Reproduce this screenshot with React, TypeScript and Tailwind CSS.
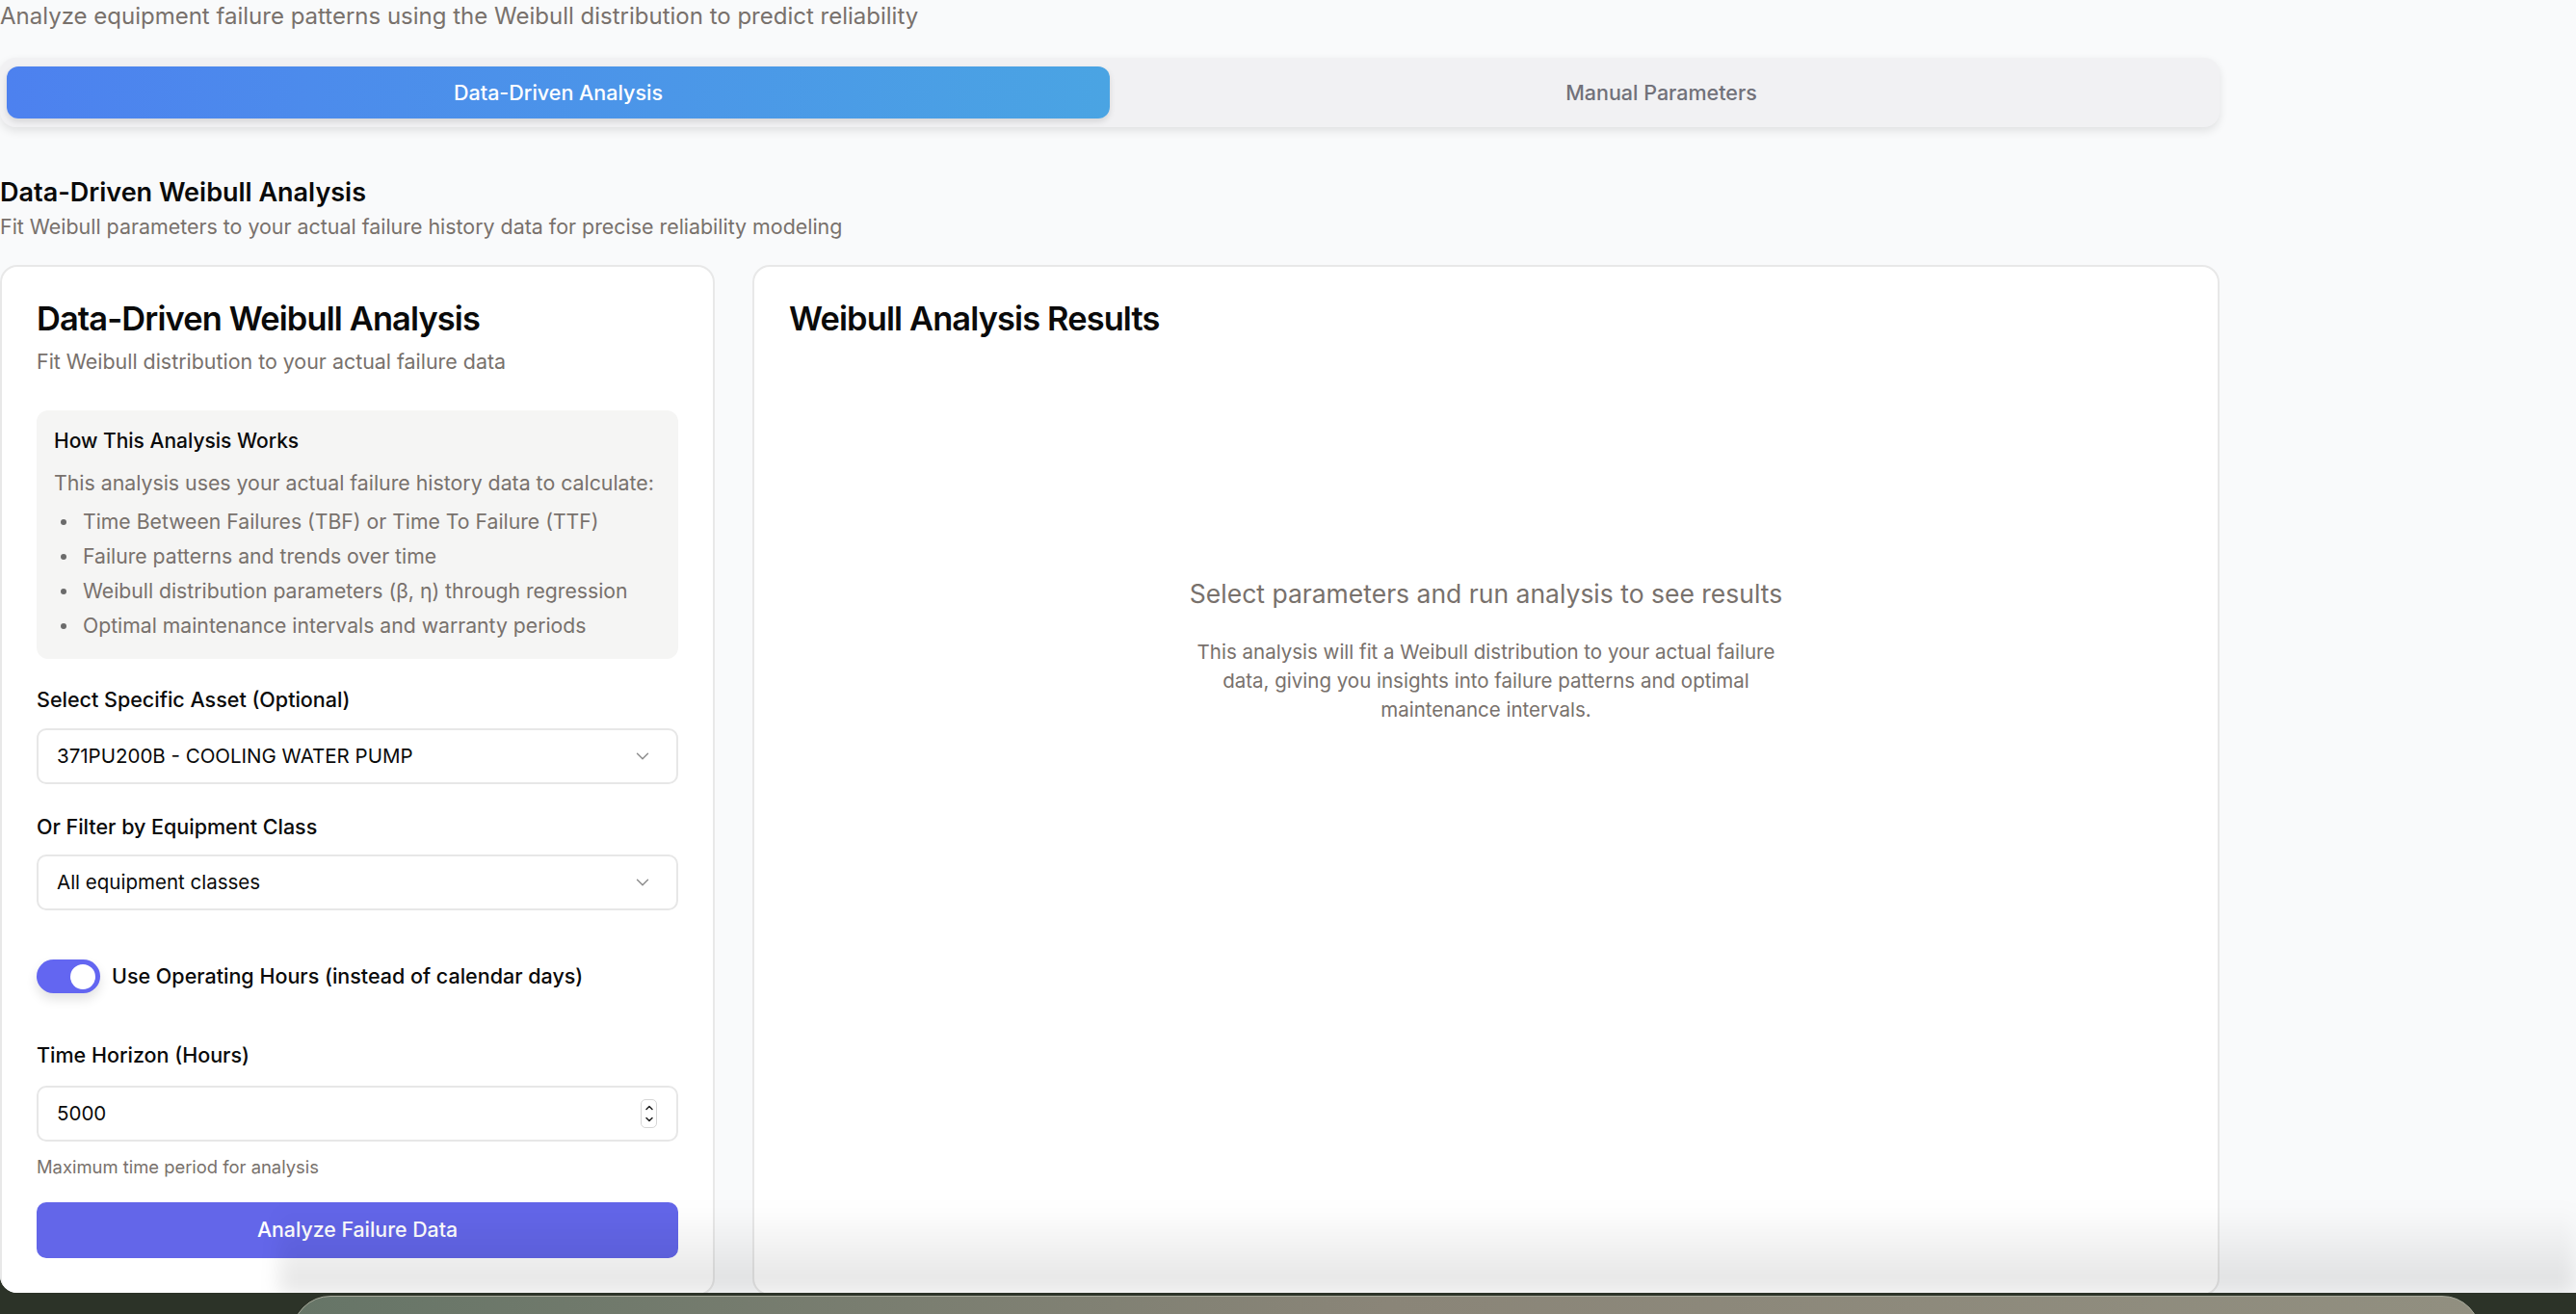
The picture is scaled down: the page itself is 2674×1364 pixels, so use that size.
import { ChevronDown, ChevronUp } from "lucide-react";

const bullets = [
    "Time Between Failures (TBF) or Time To Failure (TTF)",
    "Failure patterns and trends over time",
    "Weibull distribution parameters (β, η) through regression",
    "Optimal maintenance intervals and warranty periods",
];

function SelectBox({ value }: { value: string }) {
    return (
        <div className="flex h-[58px] items-center justify-between rounded-[10px] border-2 border-[#e7e7e7] bg-white pl-[19px] pr-[24px]">
            <span className="text-[20.5px] text-[#0a0a0a]">{value}</span>
            <ChevronDown className="h-[22px] w-[22px] text-[#8a8a8a]" strokeWidth={1.5} />
        </div>
    );
}

function Label({ children }: { children: React.ReactNode }) {
    return <div className="text-[21.5px] font-medium leading-[28px] text-[#0a0a0a]">{children}</div>;
}

export default function App() {
    return (
        <div className="relative h-[1364px] w-full overflow-hidden bg-[#2c3328] font-['Inter',sans-serif]">
            {/* browser window */}
            <div className="relative h-[1342px] overflow-hidden rounded-bl-[18px] bg-[#f9fafb]">
                <div className="w-[2304px]">
                    <p className="text-[24px] leading-[34px] text-[#78716c]">
                        Analyze equipment failure patterns using the Weibull distribution to predict reliability
                    </p>

                    <div className="mt-[26px] grid h-[72px] grid-cols-2 rounded-[16px] bg-[#f1f1f3] px-[7px] py-[9px] shadow-[0_4px_10px_rgba(0,0,0,0.10)]">
                        <div className="flex items-center justify-center rounded-[12px] bg-linear-to-r from-[#4d81ef] to-[#4aa4e3] text-[21.5px] font-medium text-white shadow-[0_3px_6px_rgba(0,0,0,0.12)]">
                            Data-Driven Analysis
                        </div>
                        <div className="flex items-center justify-center text-[21.5px] font-medium text-[#71717a]">
                            Manual Parameters
                        </div>
                    </div>

                    <h2 className="mt-[50px] text-[27px] font-semibold leading-[36px] text-[#0a0a0a]">
                        Data-Driven Weibull Analysis
                    </h2>
                    <p className="mt-[1px] text-[21.4px] leading-[32px] text-[#78716c]">
                        Fit Weibull parameters to your actual failure history data for precise reliability modeling
                    </p>

                    <div className="mt-[24px] flex gap-[39px]">
                        {/* left card */}
                        <div className="flex h-[1070px] w-[742px] shrink-0 flex-col rounded-[18px] border-2 border-[#e8e8e8] bg-white px-[36px] pt-[35px]">
                            <h3 className="text-[34.4px] font-semibold leading-[38px] tracking-tight text-[#0a0a0a]">
                                Data-Driven Weibull Analysis
                            </h3>
                            <p className="mt-[11px] text-[21.4px] leading-[28px] text-[#78716c]">
                                Fit Weibull distribution to your actual failure data
                            </p>

                            <div className="mt-[37px] rounded-[12px] bg-[#f5f5f4] px-[18px] pb-[20px] pt-[18px]">
                                <div className="text-[21px] font-medium leading-[28px] text-[#0a0a0a]">How This Analysis Works</div>
                                <p className="mt-[14px] text-[21.3px] leading-[30px] text-[#78716c]">
                                    This analysis uses your actual failure history data to calculate:
                                </p>
                                <ul className="mt-[11px] flex flex-col gap-[7px] text-[21.2px] leading-[29px] text-[#78716c]">
                                    {bullets.map(b => (
                                        <li key={b} className="flex items-center">
                                            <span className="ml-[7px] mr-[17px] h-[6px] w-[6px] shrink-0 rounded-full bg-[#6b6b6b]" />
                                            {b}
                                        </li>
                                    ))}
                                </ul>
                            </div>

                            <div className="mt-[28px]">
                                <Label>Select Specific Asset (Optional)</Label>
                            </div>
                            <div className="mt-[16px]">
                                <SelectBox value="371PU200B - COOLING WATER PUMP" />
                            </div>

                            <div className="mt-[30px]">
                                <Label>Or Filter by Equipment Class</Label>
                            </div>
                            <div className="mt-[15px]">
                                <SelectBox value="All equipment classes" />
                            </div>

                            <div className="mt-[51px] flex items-center gap-[12px]">
                                <div className="flex h-[35px] w-[66px] items-center justify-end rounded-full bg-[#6366f1] pr-[2px] shadow-[0_6px_12px_rgba(0,0,0,0.12)]">
                                    <div className="h-[32px] w-[32px] rounded-full border-[3px] border-[#6366f1] bg-white" />
                                </div>
                                <span className="text-[21.5px] font-medium text-[#0a0a0a]">Use Operating Hours (instead of calendar days)</span>
                            </div>

                            <div className="mt-[50px]">
                                <Label>Time Horizon (Hours)</Label>
                            </div>
                            <div className="mt-[18px] flex h-[58px] items-center justify-between rounded-[10px] border-2 border-[#e7e7e7] bg-white pl-[19px] pr-[20px]">
                                <span className="text-[20.5px] text-[#0a0a0a]">5000</span>
                                <div className="flex h-[30px] w-[17px] flex-col items-center justify-center rounded-[5px] border border-[#d6d6d6] bg-white">
                                    <ChevronUp className="h-[12px] w-[12px] text-[#222]" strokeWidth={3} />
                                    <ChevronDown className="h-[12px] w-[12px] text-[#222]" strokeWidth={3} />
                                </div>
                            </div>
                            <p className="mt-[14px] text-[18.4px] leading-[24px] text-[#78716c]">Maximum time period for analysis</p>

                            <button className="mt-[25px] flex h-[58px] items-center justify-center rounded-[10px] bg-[#6366e9] text-[21.3px] font-medium text-white">
                                Analyze Failure Data
                            </button>
                        </div>

                        {/* right card */}
                        <div className="flex h-[1070px] flex-1 flex-col rounded-[18px] border-2 border-[#e8e8e8] bg-white px-[36px] pt-[35px]">
                            <h3 className="text-[34.4px] font-semibold leading-[38px] tracking-tight text-[#0a0a0a]">
                                Weibull Analysis Results
                            </h3>
                            <div className="mt-[250px] flex flex-col items-center text-center">
                                <div className="text-[26.5px] leading-[32px] text-[#78716c]">
                                    Select parameters and run analysis to see results
                                </div>
                                <p className="mt-[30px] max-w-[640px] text-[20.5px] leading-[30px] text-[#78716c]">
                                    This analysis will fit a Weibull distribution to your actual failure data, giving you insights into failure patterns and optimal maintenance intervals.
                                </p>
                            </div>
                        </div>
                    </div>
                </div>

                {/* dock shadow over the window bottom */}
                <div className="pointer-events-none absolute bottom-0 left-[290px] right-0 h-[90px] bg-linear-to-b from-transparent to-[rgba(0,0,0,0.11)] blur-[10px]" />
            </div>

            {/* desktop dock */}
            <div className="absolute left-[303px] top-[1345px] h-[60px] w-[2272px] rounded-t-[40px] border border-[#a9ab9c] bg-linear-to-r from-[#667567] via-[#8a8578] to-[#918f80]" />
        </div>
    );
}
